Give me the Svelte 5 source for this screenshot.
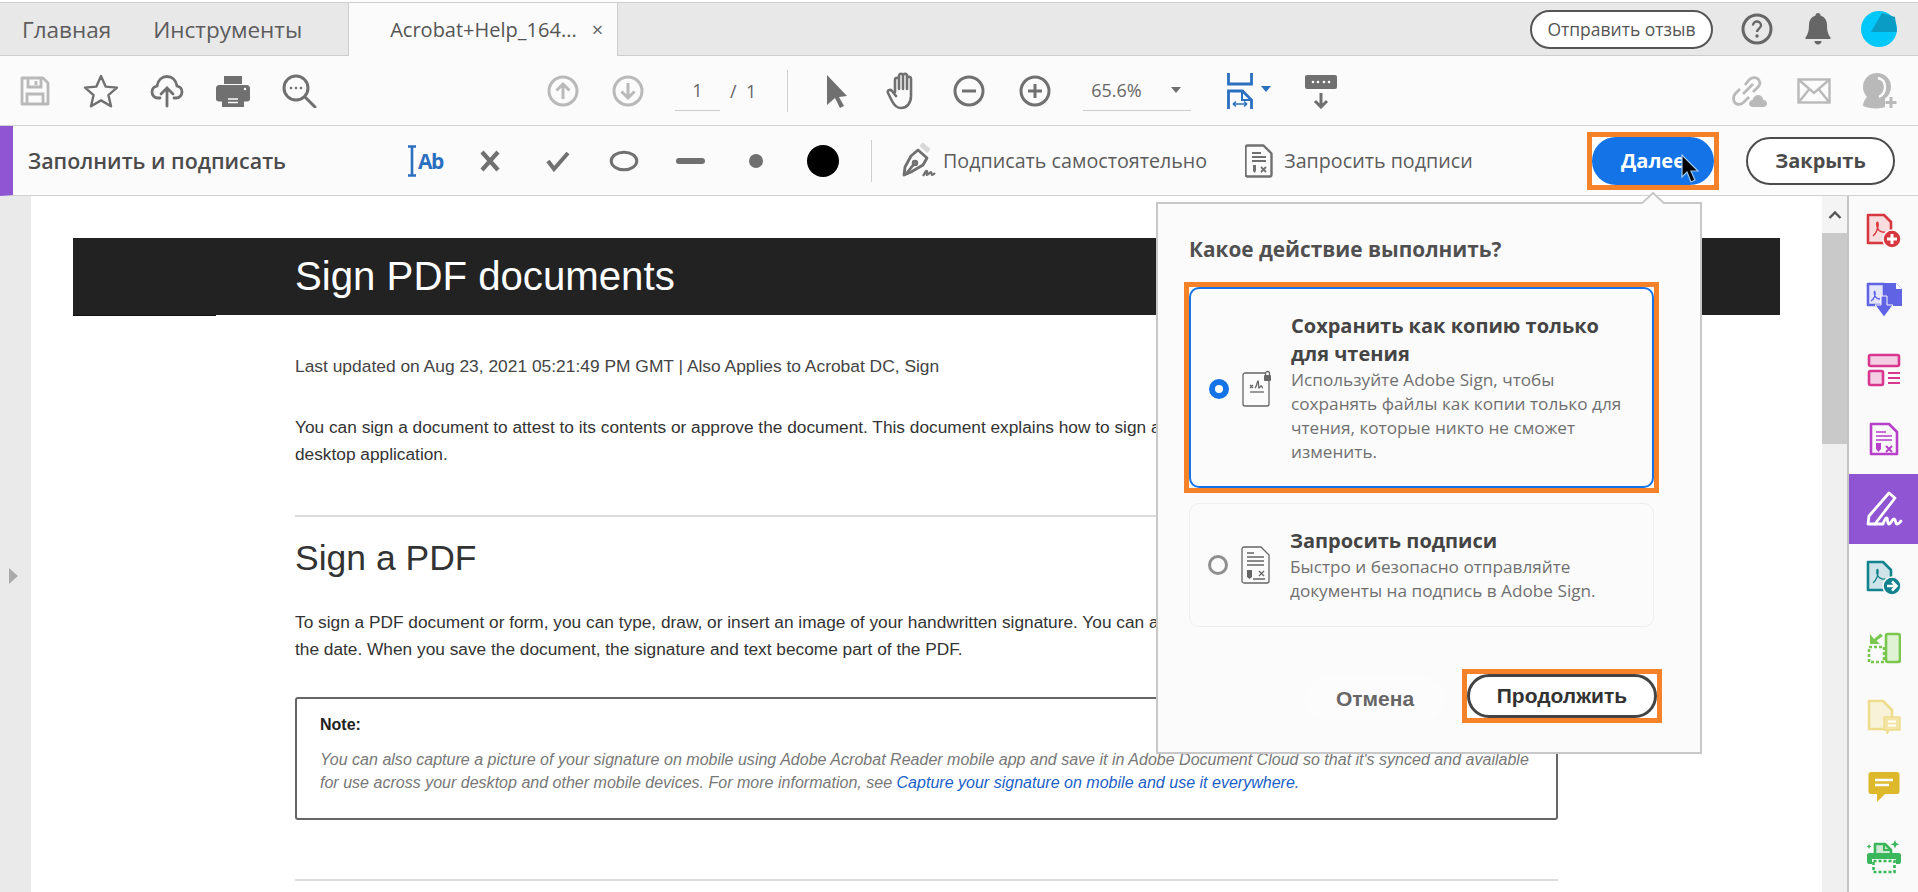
<script>
  const note = "You can also capture a picture of your signature on mobile using Adobe Acrobat Reader mobile app and save it in Adobe Document Cloud so that it's synced and available";
</script>

<div class="app">
  <!-- top tabs -->
  <div class="tabbar">
    <span class="nav nav-home">Главная</span>
    <span class="nav nav-tools">Инструменты</span>
    <div class="tab">
      <span>Acrobat+Help_164...</span>
      <span class="tab-x">×</span>
    </div>
    <div class="tabbar-right">
      <span class="feedback">Отправить отзыв</span>
      <svg class="help" width="32" height="32" viewBox="0 0 32 32"><circle cx="16" cy="16" r="14" fill="none" stroke="#666" stroke-width="3"/><path d="M12 12.5c0-2.5 2-4 4-4s4 1.500 4 3.800c0 3.200-4 3.500-4 6.700" fill="none" stroke="#666" stroke-width="2.400"/><circle cx="16" cy="23" r="1.700" fill="#666"/></svg>
      <svg class="bell" width="28" height="36" viewBox="0 0 28 36"><path d="M14 2c1.500 0 2.500 1 2.500 2.500C21 6 23 9.500 23 14c0 6 1 9 3.500 12.500v1.500h-25v-1.500C4 23 5 20 5 14c0-4.500 2-8 6.500-9.500C11.500 3 12.500 2 14 2z" fill="#666"/><path d="M10.500 30h7c0 2-1.500 3.500-3.500 3.500s-3.500-1.500-3.500-3.500z" fill="#666"/></svg>
      <svg class="avatar" width="36" height="36" viewBox="0 0 36 36"><circle cx="18" cy="18" r="18" fill="#00c8fa"/><path d="M21 2 L34 6 L36 21 L10 21z" fill="#0a9cc4"/></svg>
    </div>
  </div>

  <!-- main toolbar -->
  <div class="toolbar">
    <div class="slot">
      <svg width="32" height="32" viewBox="0 0 32 32" fill="none" stroke="#b9b9b9" stroke-width="2.800"><path d="M3 3h21l5 5v21H3z" stroke-linejoin="round"/><path d="M9 3v9h13V3M8 29V19h16v10"/><path d="M17 6v4" /></svg>
    </div>
    <div class="slot">
      <svg width="36" height="36" viewBox="0 0 36 36" fill="none" stroke="#707070" stroke-width="2.400"><path d="M18 3l4.600 10.600 11.400 1-8.600 7.500 2.600 11.200L18 27.400 8 33.300l2.600-11.200L2 14.600l11.400-1z" stroke-linejoin="round"/></svg>
    </div>
    <div class="slot">
      <svg width="34" height="34" viewBox="0 0 34 34" fill="none" stroke="#707070" stroke-width="2.800" stroke-linecap="round"><path d="M10 24H8c-3.500 0-6-2.800-6-6 0-3 2-5.300 5-6C8 6 12 2.500 17 2.500c5 0 9 3.500 10 9.500 3 .7 5 3 5 6 0 3.200-2.500 6-6 6h-2"/><path d="M17 32V14M11 20l6-6 6 6"/></svg>
    </div>
    <div class="slot">
      <svg width="34" height="32" viewBox="0 0 34 32"><path d="M8 1h18v8H8z" fill="#707070"/><path d="M3 10h28c1.500 0 3 1.500 3 3v11c0 1.500-1 2.500-3 2.500h-3V20H6v6.500H3c-2 0-3-1-3-2.500V13c0-1.500 1.500-3 3-3z" fill="#707070"/><path d="M6 20h22v12H6z" fill="#707070"/><path d="M12 24h10M12 27.500h10" stroke="#fbfbfb" stroke-width="1.500"/><circle cx="29" cy="14" r="1.200" fill="#fbfbfb"/></svg>
    </div>
    <div class="slot">
      <svg width="35" height="34" viewBox="0 0 35 34" fill="none" stroke="#707070" stroke-width="3"><circle cx="14" cy="14" r="12"/><path d="M23 23l10 10" stroke-linecap="round"/><circle cx="9" cy="14" r="1.300" fill="#707070" stroke="none"/><circle cx="14" cy="14" r="1.300" fill="#707070" stroke="none"/><circle cx="19" cy="14" r="1.300" fill="#707070" stroke="none"/></svg>
    </div>

    <div class="page-nav">
      <div class="slot slot-sm">
        <svg width="32" height="32" viewBox="0 0 32 32" fill="none" stroke="#b9b9b9" stroke-width="3"><circle cx="16" cy="16" r="14"/><path d="M16 24V9M9.500 15.500L16 9l6.500 6.500"/></svg>
      </div>
      <div class="slot slot-sm">
        <svg width="32" height="32" viewBox="0 0 32 32" fill="none" stroke="#b9b9b9" stroke-width="3"><circle cx="16" cy="16" r="14"/><path d="M16 8v15M9.500 16.500L16 23l6.500-6.500"/></svg>
      </div>
      <span class="page-input">1</span>
      <span class="page-total">/&nbsp;&nbsp;1</span>
    </div>
    <span class="vsep"></span>

    <div class="slot">
      <svg width="24" height="34" viewBox="0 0 24 34"><path d="M2 1l20 21-8 1 5 9-4 2-5-10-8 7z" fill="#707070"/></svg>
    </div>
    <div class="slot">
      <svg width="34" height="38" viewBox="0 0 34 38" fill="none" stroke="#707070" stroke-width="2.600" stroke-linecap="round" stroke-linejoin="round"><path d="M9 20V8c0-3 4-3 4 0v9M13 17V4c0-3 4-3 4 0v13M17 17V4c0-3 4-3 4 0v13M21 17V7c0-3 4-3 4 0v17c0 7-4 12-10 12-5 0-7-3-9-7l-4-8c-1-3 2-4 4-2l4 5"/></svg>
    </div>
    <div class="slot">
      <svg width="32" height="32" viewBox="0 0 32 32" fill="none" stroke="#707070" stroke-width="3"><circle cx="16" cy="16" r="14"/><path d="M9 16h14"/></svg>
    </div>
    <div class="slot">
      <svg width="32" height="32" viewBox="0 0 32 32" fill="none" stroke="#707070" stroke-width="3"><circle cx="16" cy="16" r="14"/><path d="M9 16h14M16 9v14"/></svg>
    </div>

    <div class="zoom-select">
      <span>65.6%</span>
      <span class="caret"></span>
    </div>

    <div class="fit">
      <svg width="26" height="36" viewBox="0 0 26 36" fill="none" stroke="#2a6fc0" stroke-width="2.800"><path d="M1.500 0v11h23V0"/><path d="M1.500 36V18h14l9 9v9"/><path d="M15 18v9h9" stroke-width="2"/><path d="M6 31h14M6 31l3-2.500M6 31l3 2.500M20 31l-3-2.500M20 31l-3 2.500" stroke-width="1.500"/></svg>
      <span class="caret caret-blue"></span>
    </div>

    <div class="slot keys">
      <svg width="34" height="36" viewBox="0 0 34 36"><rect x="1" y="2" width="32" height="14" rx="2" fill="#707070"/><g fill="#fff"><circle cx="9" cy="9" r="1.300"/><circle cx="14" cy="9" r="1.300"/><circle cx="20" cy="9" r="1.300"/><circle cx="25" cy="9" r="1.300"/></g><path d="M17 20v14M11 28l6 6 6-6" fill="none" stroke="#707070" stroke-width="3"/></svg>
    </div>

    <div class="toolbar-right">
      <div class="slot">
        <svg width="38" height="34" viewBox="0 0 38 34" fill="none" stroke="#b9b9b9" stroke-width="2.800"><path d="M14 20l10-10M16 11l4-5c3-3 7-3 9-1 3 3 2 6 0 8l-5 5M20 23l-5 5c-3 3-6 3-9 1-2-3-2-6 0-9l5-5"/><path d="M24 33c-3 0-4-2-4-3.500s1.500-3.500 3.500-3.500c.5-3 3-5 5.500-5s5 2 5.500 5c2 0 3.500 1.500 3.500 3.500s-1.500 3.500-4 3.500z" fill="#b9b9b9" stroke="none"/></svg>
      </div>
      <div class="slot">
        <svg width="34" height="26" viewBox="0 0 34 26" fill="none" stroke="#b9b9b9" stroke-width="2.400"><rect x="1.500" y="1.500" width="31" height="23"/><path d="M1.500 1.500L17 15 32.500 1.500M1.500 24.500L12 11.500M32.500 24.500L22 11.500"/></svg>
      </div>
      <div class="slot">
        <svg width="36" height="38" viewBox="0 0 36 38"><circle cx="15" cy="15" r="14" fill="#b9b9b9"/><path d="M5 25c-2 2-4 5-4 9 6 3 18 3 22 1V25z" fill="#b9b9b9"/><path d="M16 6c5 1 7 5 7 9s-2 8-6 10" fill="none" stroke="#fbfbfb" stroke-width="2.400"/><path d="M29 25v11M23.500 30.500h11" stroke="#fbfbfb" stroke-width="6"/><path d="M29 25v11M23.500 30.500h11" stroke="#b9b9b9" stroke-width="3"/></svg>
      </div>
    </div>
  </div>

  <!-- fill and sign -->
  <div class="fillbar">
    <span class="fill-title">Заполнить и подписать</span>

    <div class="fill-tools">
      <span class="tool-ab">
        <svg width="10" height="32" viewBox="0 0 10 32"><path d="M1 1.500h8M5 1.500v29M1 30.500h8" fill="none" stroke="#2a6fc0" stroke-width="2.600"/></svg>
        <span>Ab</span>
      </span>
      <svg class="t-x" width="22" height="22" viewBox="0 0 22 22"><path d="M3 2l16 18M19 2L3 20" stroke="#707070" stroke-width="4.200" fill="none"/></svg>
      <svg class="t-check" width="26" height="22" viewBox="0 0 26 22"><path d="M3 11l6 8L23 3" stroke="#707070" stroke-width="4" fill="none"/></svg>
      <svg class="t-oval" width="30" height="22" viewBox="0 0 30 22"><ellipse cx="15" cy="11" rx="12.800" ry="8.800" stroke="#707070" stroke-width="3" fill="none"/></svg>
      <span class="t-dash"></span>
      <span class="t-dot"></span>
      <span class="t-color"></span>
    </div>
    <span class="vsep vsep-fill"></span>

    <svg class="t-pen" width="36" height="36" viewBox="0 0 36 36" fill="none" stroke="#707070" stroke-width="2.800" stroke-linejoin="round"><path d="M20 1l8 7" stroke="#d8d8d8" stroke-width="5"/><path d="M17 7l9 8-4 7-12 7-7 3 1-8 6-11z"/><path d="M5 31l8-10"/><circle cx="14" cy="20" r="1.800"/><path d="M22 33c2-3 3-6 4-5s-1 4 0 4 3-3 4-3 0 3 1 3 2-1 3-2" stroke-width="2.200"/></svg>
    <span class="fill-link">Подписать самостоятельно</span>

    <svg class="t-req" width="28" height="34" viewBox="0 0 28 34" fill="none" stroke="#707070" stroke-width="2.400"><path d="M2.500 1.500h16l8 8v21c0 1-1 2-2 2h-22c-1 0-2-1-2-2v-27c0-1 1-2 2-2z" stroke-linejoin="round"/><path d="M7 9h9M7 13h14M7 17h14" stroke-width="1.800"/><path d="M8 21v6l1.500 2 1.500-2v-6z" fill="#707070" stroke="none"/><path d="M16 23l5 5M21 23l-5 5" stroke-width="1.800"/></svg>
    <span class="fill-link">Запросить подписи</span>

    <div class="fill-actions">
      <div class="hl">
        <span class="btn-next">Далее</span>
      </div>
      <span class="btn-close">Закрыть</span>
    </div>
  </div>

  <!-- document + rail -->
  <div class="workspace">
    <div class="side-left"><span class="side-arrow"></span></div>

    <div class="doc">
      <div class="banner"><span class="banner-notch"></span><h1>Sign PDF documents</h1></div>
      <div class="article">
        <p class="meta">Last updated on Aug 23, 2021 05:21:49 PM GMT | Also Applies to Acrobat DC, Sign</p>
        <p class="para">You can sign a document to attest to its contents or approve the document. This document explains how to sign a document using Acrobat<br/>desktop application.</p>
        <hr class="rule rule-a"/>
        <h2>Sign a PDF</h2>
        <p class="para para-b">To sign a PDF document or form, you can type, draw, or insert an image of your handwritten signature. You can also add text, such as your name, company, title, or<br/>the date. When you save the document, the signature and text become part of the PDF.</p>
        <div class="note">
          <div class="note-label">Note:</div>
          <div class="note-text">{note}<br/>for use across your desktop and other mobile devices. For more information, see <span class="note-link">Capture your signature on mobile and use it everywhere.</span></div>
        </div>
        <hr class="rule rule-b"/>
      </div>
    </div>

    <div class="scrollbar">
      <div class="scroll-up"><svg width="14" height="10" viewBox="0 0 14 10"><path d="M1.500 8L7 2.500 12.500 8" fill="none" stroke="#555" stroke-width="2.400"/></svg></div>
      <div class="scroll-thumb"></div>
    </div>

    <div class="rail">
      <div class="rail-item">
        <svg width="36" height="36" viewBox="0 0 36 36"><path d="M2 2h16l7 7v21H2z" fill="#f9dcdd" stroke="#d7373f" stroke-width="2.600" stroke-linejoin="round"/><path d="M7 23c3-2 6-9 5-13-1-2-2 1-.5 5 1.500 3 5 4.500 8 4" fill="none" stroke="#d7373f" stroke-width="1.500"/><circle cx="26" cy="26" r="9" fill="#d7373f" stroke="#fafafa" stroke-width="1.500"/><path d="M21 26h10M26 21v10" stroke="#fff" stroke-width="3"/></svg>
      </div>
      <div class="rail-item">
        <svg width="36" height="36" viewBox="0 0 36 36"><path d="M2 2h16v21H2z" fill="#e4e5fb" stroke="#5f63e4" stroke-width="2.600" stroke-linejoin="round"/><path d="M5 19c3-2 5-6 4-9-1-2-1 1 0 4 1 2 3 3 5 3" fill="none" stroke="#5f63e4" stroke-width="1.300"/><path d="M19 1h11l6 6v17H19z" fill="#5f63e4"/><path d="M30 1v6h6" fill="#fafafa"/><path d="M15 14h6v9h6L18 35 9 23h6z" fill="#5f63e4" stroke="#fafafa" stroke-width="1"/></svg>
      </div>
      <div class="rail-item">
        <svg width="34" height="34" viewBox="0 0 34 34"><rect x="2" y="2" width="30" height="11" rx="1.500" fill="#f4cfe3" stroke="#d83790" stroke-width="2.600"/><rect x="2" y="18" width="14" height="14" rx="1.500" fill="#f4cfe3" stroke="#d83790" stroke-width="2.600"/><path d="M21 20h12M21 25h12M21 30h12" stroke="#d83790" stroke-width="1.800"/></svg>
      </div>
      <div class="rail-item">
        <svg width="30" height="34" viewBox="0 0 30 34" fill="none" stroke="#b83fc9" stroke-width="2.600"><path d="M2 2h18l8 8v22H2z" stroke-linejoin="round"/><path d="M7 10h10M7 14h16M7 18h16" stroke-width="1.700"/><path d="M7 21h5v6l-2.500 3L7 27z" fill="#b83fc9" stroke="none"/><path d="M17 24l6 6M23 24l-6 6" stroke-width="2"/></svg>
      </div>
      <div class="rail-item rail-active">
        <svg width="38" height="36" viewBox="0 0 38 36" fill="none" stroke="#fff" stroke-width="2.800" stroke-linejoin="round"><path d="M24 2l6 5-17 22-3 4H3l1-8z"/><path d="M10 33h8c1-3 3-7 4-6s0 6 2 6 3-5 5-5 1 5 3 5 3-2 4-3" stroke-linecap="round"/></svg>
      </div>
      <div class="rail-item">
        <svg width="36" height="36" viewBox="0 0 36 36"><path d="M2 2h15l8 8v20H2z" fill="#cfe4e8" stroke="#12838e" stroke-width="2.600" stroke-linejoin="round"/><path d="M7 23c3-2 6-9 5-13-1-2-2 1-.5 5 1.500 3 5 4.500 8 4" fill="none" stroke="#12838e" stroke-width="1.300"/><circle cx="26" cy="26" r="9" fill="#12838e" stroke="#fafafa" stroke-width="1.500"/><path d="M21 26h8M26 21.500l4.500 4.500-4.500 4.500" fill="none" stroke="#fff" stroke-width="2.600"/></svg>
      </div>
      <div class="rail-item">
        <svg width="34" height="32" viewBox="0 0 34 32"><rect x="19" y="2" width="14" height="28" rx="2" fill="#dff2d3" stroke="#7ac74f" stroke-width="2.600"/><rect x="2" y="15" width="15" height="15" fill="none" stroke="#7ac74f" stroke-width="2.600" stroke-dasharray="3 2"/><path d="M3 2v10h10l-3.500-3.500L16 4l-2.500-2.500L7 7z" fill="#7ac74f"/></svg>
      </div>
      <div class="rail-item">
        <svg width="34" height="36" viewBox="0 0 34 36"><path d="M2 2h14l9 9v19H2z" fill="#f8f3d8" stroke="#eedd8d" stroke-width="2.600" stroke-linejoin="round"/><path d="M17 18h16v13H22l-2 4v-4h-3z" fill="#f3e6a4" stroke="#eedd8d" stroke-width="1.500"/><path d="M21 22.500h8M21 26.500h8" stroke="#fff" stroke-width="1.800"/></svg>
      </div>
      <div class="rail-item">
        <svg width="32" height="32" viewBox="0 0 32 32"><path d="M3 1h26c1.500 0 2.500 1 2.500 2.500v17c0 1.500-1 2.500-2.500 2.500H17l-8 8v-8H3c-1.500 0-2.500-1-2.500-2.500v-17C.5 2 1.500 1 3 1z" fill="#dcb82a"/><path d="M7 9h18M7 14h14" stroke="#fff" stroke-width="2.400"/></svg>
      </div>
      <div class="rail-item">
        <svg width="36" height="36" viewBox="0 0 36 36"><path d="M9 18V6h10l6 6v6" fill="#cfe9d5" stroke="#3ab75a" stroke-width="2.600" stroke-linejoin="round"/><path d="M18 6v6h7" fill="none" stroke="#3ab75a" stroke-width="2"/><path d="M3 15h30c1 0 2 1 2 2v7c0 1-1 2-2 2h-3v-5H6v5H3c-1 0-2-1-2-2v-7c0-1 1-2 2-2z" fill="#3ab75a"/><rect x="7.500" y="23" width="21" height="11" fill="none" stroke="#3ab75a" stroke-width="2.600" stroke-dasharray="3 2"/><path d="M29 2l1.200 3 3 1.200-3 1.200L29 10.500l-1.200-3-3-1.200 3-1.200zM3 6l.8 1.700 1.700.8-1.700.8L3 11l-.8-1.700L.5 8.500l1.700-.8z" fill="#3ab75a"/></svg>
      </div>
    </div>
  </div>

  <!-- action popover -->
  <div class="popover">
    <svg class="pop-arrow" width="24" height="12" viewBox="0 0 24 12"><path d="M0 12L12 1l12 11" fill="#fbfbfb" stroke="#c8c8c8" stroke-width="2"/></svg>
    <div class="pop-title">Какое действие выполнить?</div>

    <div class="hl hl-card">
      <div class="card card-on">
        <span class="radio radio-on"></span>
        <svg class="card-ic" width="30" height="38" viewBox="0 0 30 38" fill="none" stroke="#666" stroke-width="1.300"><path d="M23 3H3c-1 0-2 1-2 2v29c0 1 1 2 2 2h22c1 0 2-1 2-2V8"/><rect x="22" y="5" width="7" height="6" rx="1" fill="#666" stroke="none"/><path d="M23.500 5.500V3.500a2 2 0 0 1 4 0v2"/><path d="M8 22h14" /><path d="M8 15l3 3M11 15l-3 3" /><path d="M13 18c2-2 2-7 3-7s0 7 1 7 1-2 2-2 1 2 2 2"/></svg>
        <div class="card-body">
          <div class="card-title">Сохранить как копию только для чтения</div>
          <div class="card-desc">Используйте Adobe Sign, чтобы сохранять файлы как копии только для чтения, которые никто не сможет изменить.</div>
        </div>
      </div>
    </div>

    <div class="card">
      <span class="radio"></span>
      <svg class="card-ic" width="30" height="38" viewBox="0 0 30 38" fill="none" stroke="#666" stroke-width="1.300"><path d="M3 1h17l8 8v26c0 1-1 2-2 2H3c-1 0-2-1-2-2V3c0-1 1-2 2-2z"/><path d="M6 7h7M6 11h17M6 15h17M6 19h17"/><path d="M6 24h5v7l-2.500 2L6 31z" fill="#666" stroke="none"/><path d="M18 25l5 5M23 25l-5 5M12 33h12" /></svg>
      <div class="card-body">
        <div class="card-title">Запросить подписи</div>
        <div class="card-desc">Быстро и безопасно отправляйте документы на подпись в Adobe Sign.</div>
      </div>
    </div>

    <div class="pop-actions">
      <span class="btn-cancel">Отмена</span>
      <div class="hl hl-continue">
        <span class="btn-continue">Продолжить</span>
      </div>
    </div>
  </div>

  <svg class="cursor" width="20" height="30" viewBox="0 0 20 30"><path d="M2 1v22l5-5 4 10 4-2-4-9h7z" fill="#000" stroke="#9cc8f0" stroke-width="1.200"/></svg>
</div>

<style>
  :global(body) {
    margin: 0;
    background: #fff;
    overflow: hidden;
  }

  .app {
    position: relative;
    width: 1918px;
    height: 892px;
    display: flex;
    flex-direction: column;
    overflow: hidden;
    font-family: "Open Sans", "Liberation Sans", sans-serif;
    color: #555;
  }

  svg {
    display: block;
    flex: none;
  }

  /* annotation frame round the highlighted controls */
  .hl {
    box-sizing: border-box;
    border: 5px solid #f58128;
    background: #fff;
    flex: none;
  }

  /* tabs */
  .tabbar {
    display: flex;
    align-items: stretch;
    box-sizing: border-box;
    height: 54px;
    margin-top: 2px;
    background: #e8e8e8;
    border-top: 1px solid #cdcdcd;
    border-bottom: 1px solid #cdcdcd;
    flex: none;
  }

  .nav {
    display: flex;
    align-items: center;
    font-size: 22.500px;
    color: #5c5c5c;
  }

  .nav-home {
    margin-left: 22px;
  }

  .nav-tools {
    margin-left: 42px;
  }

  .tab {
    display: flex;
    align-items: center;
    box-sizing: border-box;
    width: 270px;
    margin-left: 46px;
    margin-bottom: -1px;
    padding-left: 41px;
    background: #fbfbfb;
    border-left: 1px solid #cdcdcd;
    border-right: 1px solid #cdcdcd;
    font-size: 20px;
    color: #555;
  }

  .tab-x {
    margin-left: 15px;
    font-size: 20px;
    color: #666;
  }

  .tabbar-right {
    margin-left: auto;
    display: flex;
    align-items: center;
    padding-right: 21px;
  }

  .feedback {
    display: flex;
    align-items: center;
    justify-content: center;
    box-sizing: border-box;
    width: 183px;
    height: 39px;
    border: 2px solid #555;
    border-radius: 20px;
    background: #fff;
    font-size: 17.500px;
    color: #555;
  }

  .help {
    margin-left: 28px;
  }

  .bell {
    margin-left: 31px;
  }

  .avatar {
    margin-left: 29px;
  }

  /* toolbar */
  .toolbar {
    display: flex;
    align-items: center;
    height: 69px;
    padding-left: 2px;
    background: #fbfbfb;
    border-bottom: 1px solid #d2d2d2;
    flex: none;
  }

  .slot {
    display: flex;
    align-items: center;
    justify-content: center;
    width: 66px;
    flex: none;
  }

  .slot-sm {
    width: 65px;
  }

  .page-nav {
    display: flex;
    align-items: center;
    margin-left: 198px;
    font-size: 18px;
    color: #666;
  }

  .page-input {
    box-sizing: border-box;
    width: 45px;
    height: 40px;
    margin-left: 15px;
    line-height: 38px;
    text-align: center;
    border-bottom: 1px solid #ccc;
  }

  .page-total {
    margin-left: 10px;
  }

  .vsep {
    width: 1px;
    height: 42px;
    margin-left: 31px;
    background: #cfcfcf;
    flex: none;
  }

  .toolbar .vsep + .slot {
    margin-left: 16px;
  }

  .zoom-select {
    display: flex;
    align-items: center;
    box-sizing: border-box;
    width: 108px;
    height: 40px;
    margin-left: 15px;
    padding-left: 8px;
    border-bottom: 1px solid #ccc;
    font-size: 18px;
    color: #666;
  }

  .caret {
    width: 0;
    height: 0;
    margin-left: 29px;
    border-left: 5px solid transparent;
    border-right: 5px solid transparent;
    border-top: 6px solid #707070;
  }

  .fit {
    display: flex;
    align-items: center;
    margin-left: 36px;
  }

  .caret-blue {
    margin-left: 8px;
    margin-top: -4px;
    border-top-color: #2a6fc0;
  }

  .keys {
    margin-left: 17px;
  }

  .toolbar-right {
    margin-left: auto;
    display: flex;
    padding-right: 5px;
  }

  /* fill and sign */
  .fillbar {
    display: flex;
    align-items: center;
    height: 69px;
    background: #fbfbfb;
    border-left: 13px solid #8f55d2;
    padding-left: 15px;
    border-bottom: 1px solid #d2d2d2;
    flex: none;
  }

  .fill-title {
    width: 379px;
    font-size: 21.400px;
    font-weight: 600;
    color: #4b4b4b;
    white-space: nowrap;
    flex: none;
  }

  .fill-tools {
    display: flex;
    align-items: center;
    flex: none;
  }

  .tool-ab {
    display: flex;
    align-items: center;
    gap: 1px;
    width: 38px;
    font-size: 21px;
    font-weight: 700;
    color: #2a6fc0;
    letter-spacing: -1.500px;
  }

  .t-x {
    margin-left: 34px;
  }

  .t-check {
    margin-left: 44px;
  }

  .t-oval {
    margin-left: 38px;
  }

  .t-dash {
    width: 29px;
    height: 6px;
    margin-left: 37px;
    border-radius: 3px;
    background: #707070;
  }

  .t-dot {
    width: 14px;
    height: 14px;
    margin-left: 44px;
    border-radius: 50%;
    background: #707070;
  }

  .t-color {
    width: 32px;
    height: 32px;
    margin-left: 44px;
    border-radius: 50%;
    background: #000;
  }

  .vsep-fill {
    margin-left: 32px;
  }

  .t-pen {
    margin-left: 29px;
  }

  .fill-link {
    margin-left: 6px;
    font-size: 19.700px;
    color: #5c5c5c;
    white-space: nowrap;
  }

  .t-req {
    margin-left: 38px;
  }

  .t-req + .fill-link {
    margin-left: 11px;
  }

  .fill-actions {
    margin-left: auto;
    display: flex;
    align-items: center;
    padding-right: 23px;
  }

  .btn-next {
    display: flex;
    align-items: center;
    justify-content: center;
    width: 122px;
    height: 48px;
    border-radius: 24px;
    background: #1473e6;
    color: #fff;
    font-size: 20px;
    font-weight: 700;
  }

  .btn-close {
    display: flex;
    align-items: center;
    justify-content: center;
    box-sizing: border-box;
    width: 149px;
    height: 48px;
    margin-left: 27px;
    border: 2px solid #4b4b4b;
    border-radius: 24px;
    background: #fff;
    color: #4b4b4b;
    font-size: 20px;
    font-weight: 700;
  }

  /* document area */
  .workspace {
    display: flex;
    flex: 1;
    min-height: 0;
  }

  .side-left {
    position: relative;
    width: 31px;
    background: #eaeaea;
    flex: none;
  }

  .side-arrow {
    position: absolute;
    top: 372px;
    left: 9px;
    border-left: 9px solid #aaa;
    border-top: 8px solid transparent;
    border-bottom: 8px solid transparent;
  }

  .doc {
    flex: 1;
    min-width: 0;
    background: #fff;
    overflow: hidden;
    font-family: "Liberation Sans", Arial, sans-serif;
    color: #333;
  }

  .banner {
    position: relative;
    width: 1707px;
    height: 77px;
    margin: 42px 0 0 42px;
    background: #222;
    display: flex;
    align-items: center;
    padding-left: 222px;
    box-sizing: border-box;
  }

  .banner-notch {
    position: absolute;
    left: 0;
    bottom: -1px;
    width: 143px;
    height: 1px;
    background: #111;
  }

  h1 {
    margin: 0;
    font-size: 40.200px;
    font-weight: 400;
    color: #fff;
  }

  .article {
    width: 1263px;
    margin-left: 264px;
  }

  .meta {
    margin: 38px 0 0;
    font-size: 17.400px;
    line-height: 27px;
    white-space: nowrap;
    color: #444;
  }

  .para {
    margin: 34px 0 0;
    font-size: 17.300px;
    line-height: 27px;
    white-space: nowrap;
    color: #333;
  }

  .rule {
    height: 2px;
    margin: 0;
    border: 0;
    background: #dcdcdc;
  }

  .rule-a {
    margin-top: 47px;
  }

  h2 {
    margin: 19px 0 0;
    font-size: 35.500px;
    line-height: 44px;
    font-weight: 400;
    color: #333;
  }

  .para-b {
    margin-top: 29px;
  }

  .note {
    box-sizing: border-box;
    height: 123px;
    margin-top: 34px;
    padding: 16px 23px;
    border: 2px solid #666;
    border-radius: 3px;
  }

  .note-label {
    font-size: 16px;
    line-height: 20px;
    font-weight: 700;
    color: #222;
  }

  .note-text {
    margin-top: 13px;
    font-size: 16.050px;
    line-height: 23px;
    font-style: italic;
    color: #777;
    white-space: nowrap;
  }

  .note-link {
    color: #1a5fc8;
  }

  .rule-b {
    margin-top: 59px;
  }

  .scrollbar {
    width: 25px;
    background: #f0f0f0;
    flex: none;
  }

  .scroll-up {
    display: flex;
    align-items: center;
    justify-content: center;
    height: 37px;
    background: #f4f4f4;
  }

  .scroll-thumb {
    height: 211px;
    background: #c9c9c9;
  }

  .rail {
    width: 69px;
    background: #fafafa;
    border-left: 2px solid #c4c4c4;
    flex: none;
  }

  .rail-item {
    display: flex;
    align-items: center;
    justify-content: center;
    height: 69.500px;
  }

  .rail-active {
    background: #8f55d2;
  }

  /* popover */
  .popover {
    position: absolute;
    left: 1156px;
    top: 202px;
    box-sizing: border-box;
    width: 546px;
    height: 552px;
    padding: 31px 0 0 31px;
    background: #fbfbfb;
    border: 2px solid #c8c8c8;
  }

  .pop-arrow {
    position: absolute;
    top: -12px;
    left: 483px;
  }

  .pop-title {
    font-size: 20.800px;
    line-height: 28px;
    font-weight: 700;
    color: #505050;
  }

  .hl-card {
    width: 475px;
    margin: 19px 0 0 -5px;
  }

  .card {
    display: flex;
    align-items: center;
    box-sizing: border-box;
    width: 465px;
    min-height: 124px;
    margin-top: 10px;
    padding: 0 20px 0 18px;
    background: #fbfbfb;
    border: 1px solid #eee;
    border-radius: 10px;
  }

  .card-on {
    height: 201px;
    margin-top: 0;
    border: 2px solid #1473e6;
  }

  .radio {
    box-sizing: border-box;
    width: 20px;
    height: 20px;
    border: 3px solid #8e8e8e;
    border-radius: 50%;
    flex: none;
  }

  .radio-on {
    border: 6px solid #1473e6;
    background: #fff;
  }

  .card-on .radio,
  .card-on .card-ic {
    margin-top: 3px;
  }

  .card-ic {
    margin-left: 13px;
  }

  .card-body {
    width: 335px;
    margin-left: 19px;
    min-width: 0;
  }

  .card-title {
    font-size: 20px;
    line-height: 28px;
    font-weight: 700;
    color: #444;
  }

  .card-desc {
    font-size: 17.200px;
    line-height: 24px;
    color: #707070;
  }

  .pop-actions {
    display: flex;
    align-items: center;
    justify-content: flex-end;
    width: 473px;
    margin-top: 42px;
  }

  .btn-cancel {
    display: flex;
    align-items: center;
    justify-content: center;
    width: 140px;
    height: 44px;
    margin-right: 17px;
    margin-top: 5px;
    border-radius: 22px;
    background: #fcfcfc;
    font-family: "Liberation Sans", sans-serif;
    font-size: 21px;
    font-weight: 700;
    color: #666;
  }

  .btn-continue {
    display: flex;
    align-items: center;
    justify-content: center;
    box-sizing: border-box;
    width: 190px;
    height: 44px;
    border: 3px solid #444;
    border-radius: 22px;
    background: #fff;
    font-family: "Liberation Sans", sans-serif;
    font-size: 21px;
    font-weight: 700;
    color: #333;
  }

  .cursor {
    position: absolute;
    left: 1680px;
    top: 154px;
  }
</style>
